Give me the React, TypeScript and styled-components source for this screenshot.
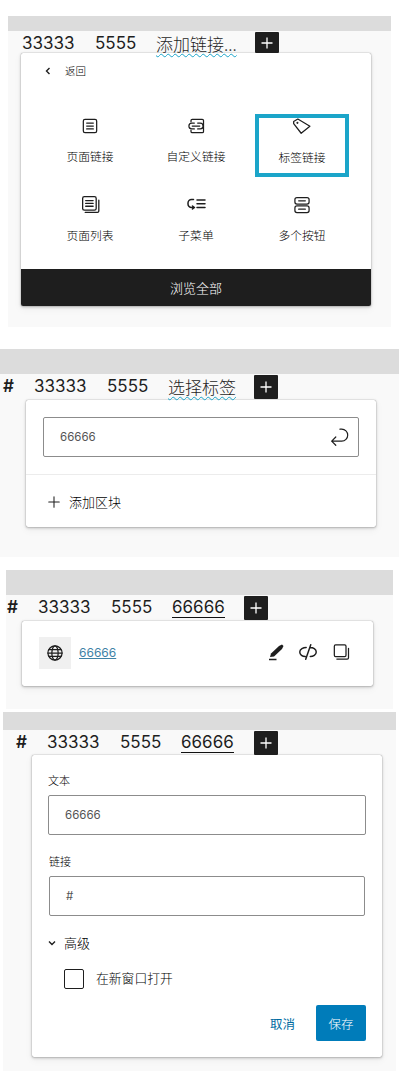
import React from "react";
import styled, { createGlobalStyle } from "styled-components";

const Global = createGlobalStyle`
  html, body { margin: 0; padding: 0; background: #fff; }
  body { font-family: Inter, "Noto Sans CJK SC", sans-serif; color: #1e1e1e; }
  * { box-sizing: border-box; }
`;

const Page = styled.div`
  width: 407px;
  height: 1081px;
  overflow: hidden;
  display: flex;
  flex-direction: column;
`;

const Section = styled.section<{ $top: number; $left: number; $width: number; $height: number }>`
  margin-top: ${(p) => p.$top}px;
  margin-left: ${(p) => p.$left}px;
  width: ${(p) => p.$width}px;
  height: ${(p) => p.$height}px;
  background: #f9f9f9;
  flex: none;
`;

const GrayBar = styled.div<{ $h: number }>`
  height: ${(p) => p.$h}px;
  background: #dcdcdc;
`;

const NavRow = styled.div<{ $pad: number; $h: number }>`
  height: ${(p) => p.$h}px;
  padding-left: ${(p) => p.$pad}px;
  display: flex;
  align-items: flex-start;
  font-size: 17px;
  line-height: 25px;
  color: #1e1e1e;
`;

const Hash = styled.span`
  width: 31px;
  flex: none;
  font-weight: 600;
`;

const NavItem = styled.span<{ $w: number }>`
  width: ${(p) => p.$w}px;
  flex: none;
  white-space: nowrap;
`;

const Wavy = styled.span`
  text-decoration: underline wavy #1ba5c9 1px;
  text-underline-offset: 2px;
  font-family: "Noto Sans CJK SC", sans-serif;
  font-weight: 300;
  color: #1e1e1e;
`;

const Underlined = styled.span`
  border-bottom: 1px solid #111;
  padding-bottom: 0;
`;

const AddButton = styled.span<{ $h: number }>`
  width: 24px;
  height: ${(p) => p.$h}px;
  margin-top: 1px;
  background: #1e1e1e;
  border-radius: 1px;
  display: flex;
  align-items: center;
  justify-content: center;
  flex: none;
`;

const Popover = styled.div<{ $left: number; $width: number; $height: number }>`
  margin-left: ${(p) => p.$left}px;
  width: ${(p) => p.$width}px;
  height: ${(p) => p.$height}px;
  background: #fff;
  border-radius: 2px;
  box-shadow: 0 0 1px rgba(0, 0, 0, 0.5), 0 1px 3px rgba(0, 0, 0, 0.25), 0 3px 8px rgba(0, 0, 0, 0.05);
  display: flex;
  flex-direction: column;
  overflow: hidden;
  font-weight: 300;
  color: #000;
`;

const BackRow = styled.div`
  height: 61px;
  padding: 12px 0 0 24px;
  display: flex;
  align-items: flex-start;
  gap: 14px;
  font-size: 10.5px;
  line-height: 13px;
`;

const Grid = styled.div`
  padding: 0 16px;
  display: grid;
  grid-template-columns: repeat(3, 106px);
  grid-auto-rows: 63px;
  row-gap: 16px;
`;

const Tile = styled.div<{ $on?: boolean }>`
  width: 94px;
  justify-self: center;
  display: flex;
  flex-direction: column;
  align-items: center;
  padding-top: ${(p) => (p.$on ? 0 : 3)}px;
  border: ${(p) => (p.$on ? "4px solid #1ba5c9" : "none")};
  font-size: 11.8px;
  line-height: 14px;
`;

const TileIcon = styled.div`
  height: 17px;
  display: flex;
  align-items: center;
  justify-content: center;
`;

const TileLabel = styled.div`
  margin-top: 16px;
  white-space: nowrap;
`;

const Footer = styled.div`
  margin-top: auto;
  height: 37px;
  background: #1e1e1e;
  color: #fff;
  font-size: 13px;
  display: flex;
  align-items: center;
  justify-content: center;
`;

const Field = styled.div<{ $ml: number; $mr: number }>`
  margin: 0 ${(p) => p.$mr}px 0 ${(p) => p.$ml}px;
  height: 40px;
  padding: 0 8px 0 16px;
  border: 1px solid #8c8c8c;
  border-radius: 2px;
  background: #fff;
  display: flex;
  align-items: center;
  justify-content: space-between;
  font-size: 11.5px;
  font-weight: 400;
  color: #555;
`;

const SearchTop = styled.div`
  padding-top: 17px;
  height: 75px;
  border-bottom: 1px solid #ececec;
`;

const AddBlock = styled.div`
  padding: 16px 0 0 21px;
  display: flex;
  align-items: center;
  gap: 8px;
  font-size: 13px;
  line-height: 22px;
`;

const LinkRow = styled.div`
  height: 100%;
  padding: 16px 22px 0 17px;
  display: flex;
  align-items: flex-start;
`;

const IconTile = styled.div`
  width: 32px;
  height: 32px;
  background: #f0f0f0;
  display: flex;
  align-items: center;
  justify-content: center;
  flex: none;
`;

const LinkText = styled.a`
  margin-left: 8px;
  font-size: 12px;
  font-weight: 400;
  line-height: 32px;
  color: #3f82a6;
  text-decoration: underline;
  flex: 1;
`;

const ToolIcons = styled.div`
  display: flex;
  align-items: center;
  height: 30px;
  gap: 12px;
`;

const Form = styled.div`
  padding-top: 19px;
  display: flex;
  flex-direction: column;
  height: 100%;
`;

const Label = styled.div<{ $ml: number; $mt: number }>`
  margin: ${(p) => p.$mt}px 0 7px ${(p) => p.$ml}px;
  font-size: 11px;
  line-height: 14px;
`;

const Advanced = styled.div`
  margin: 18px 0 0 16px;
  display: flex;
  align-items: center;
  gap: 8px;
  font-size: 13px;
  line-height: 18px;
`;

const CheckRow = styled.div`
  margin: 17px 0 0 32px;
  display: flex;
  align-items: center;
  gap: 12px;
  font-size: 12.8px;
  line-height: 20px;
`;

const Box = styled.span`
  width: 20px;
  height: 20px;
  border: 1px solid #1e1e1e;
  border-radius: 2px;
  flex: none;
`;

const Actions = styled.div`
  margin: 16px 16px 0 0;
  display: flex;
  justify-content: flex-end;
  align-items: center;
  gap: 21px;
  font-size: 12.5px;
`;

const Cancel = styled.span`
  color: #006ba1;
  font-weight: 400;
`;

const Save = styled.span`
  width: 50px;
  height: 36px;
  background: #007cba;
  color: #fff;
  border-radius: 2px;
  display: flex;
  align-items: center;
  justify-content: center;
`;

const Icon: React.FC<{ size?: number; stroke?: string; sw?: number; children: React.ReactNode }> = ({ size = 20, stroke = "#1e1e1e", sw = 1.5, children }) => (
  <svg width={size} height={size} viewBox="0 0 24 24" fill="none" stroke={stroke} strokeWidth={sw} strokeLinecap="round" strokeLinejoin="round">
    {children}
  </svg>
);

const Plus = () => (
  <svg width="14" height="14" viewBox="0 0 14 14">
    <path d="M7 1.5v11M1.5 7h11" stroke="#fff" strokeWidth="1.3" />
  </svg>
);

const Nav: React.FC<{ pad: number; hash?: boolean; third: React.ReactNode; thirdW: number; h?: number; btnH?: number }> = ({ pad, hash, third, thirdW, h = 24, btnH = 24 }) => (
  <NavRow $pad={pad} $h={h}>
    {hash && <Hash>#</Hash>}
    <NavItem $w={73}>33333</NavItem>
    <NavItem $w={61}>5555</NavItem>
    <NavItem $w={thirdW}>{third}</NavItem>
    <AddButton $h={btnH}><Plus /></AddButton>
  </NavRow>
);

const tiles: { label: string; on?: boolean; icon: React.ReactNode }[] = [
  {
    label: "页面链接",
    icon: (
      <Icon>
        <rect x="4" y="4" width="16" height="16" rx="2" />
        <path d="M8 8.500h8M8 12h8M8 15.500h8" />
      </Icon>
    ),
  },
  {
    label: "自定义链接",
    icon: (
      <Icon>
        <path d="M6 7V5.500A1.500 1.500 0 0 1 7.500 4h12A1.500 1.500 0 0 1 21 5.500v13a1.500 1.500 0 0 1-1.500 1.500h-12A1.500 1.500 0 0 1 6 18.500V17" />
        <path d="M10 8.500H7a3.500 3.500 0 0 0 0 7h3M14 8.500h3a3.500 3.500 0 0 1 0 7h-3M7.500 12h9" />
      </Icon>
    ),
  },
  {
    label: "标签链接",
    on: true,
    icon: (
      <Icon>
        <path d="M2 5.500 7 2.500 21.500 11 11 19.500 2 8z" />
        <circle cx="6.500" cy="7" r="0.500" fill="#1e1e1e" />
      </Icon>
    ),
  },
  {
    label: "页面列表",
    icon: (
      <Icon size={21}>
        <rect x="3" y="3" width="15.500" height="15.500" rx="2" />
        <path d="M6.500 7.500h8.500M6.500 10.800h8.500M6.500 14h8.500M21.500 7v12.500a1.500 1.500 0 0 1-1.500 1.500H6" />
      </Icon>
    ),
  },
  {
    label: "子菜单",
    icon: (
      <Icon size={24}>
        <path d="M9.500 6.500H7.500A3.500 3.500 0 0 0 4 10v1a3.500 3.500 0 0 0 3.500 3.500H10M8.500 13l2 1.500-2 1.500" />
        <path d="M13 7h8M13 10.800h8M13 14.500h8" />
      </Icon>
    ),
  },
  {
    label: "多个按钮",
    icon: (
      <Icon>
        <rect x="3.500" y="3" width="17" height="8" rx="2.500" />
        <rect x="3.500" y="13" width="17" height="8" rx="2.500" />
        <path d="M8 7h8M8 17h8" />
      </Icon>
    ),
  },
];

export default function App() {
  return (
    <Page>
      <Global />
      <Section $top={16} $left={8} $width={383} $height={311}>
        <GrayBar $h={15} />
        <Nav pad={14} h={22} btnH={21} thirdW={99} third={<Wavy>添加链接...</Wavy>} />
        <Popover $left={13} $width={350} $height={253}>
          <BackRow>
            <svg width="6" height="8" viewBox="0 0 6 8" style={{ marginTop: 2 }}>
              <path d="M4.500 1 1.500 4l3 3" fill="none" stroke="#1e1e1e" strokeWidth="1.400" />
            </svg>
            <span>返回</span>
          </BackRow>
          <Grid>
            {tiles.map((t) => (
              <Tile key={t.label} $on={t.on}>
                <TileIcon>{t.icon}</TileIcon>
                <TileLabel>{t.label}</TileLabel>
              </Tile>
            ))}
          </Grid>
          <Footer>浏览全部</Footer>
        </Popover>
      </Section>

      <Section $top={22} $left={0} $width={399} $height={208}>
        <GrayBar $h={25} />
        <Nav pad={3} hash h={26} thirdW={86} third={<Wavy>选择标签</Wavy>} />
        <Popover $left={26} $width={350} $height={127}>
          <SearchTop>
            <Field $ml={17} $mr={17}>
              <span>66666</span>
              <Icon size={22} sw={1.300}>
                <path d="M13 3.500h2a6.500 6.500 0 0 1 0 13H4M8.500 12l-4.500 4.500 4.500 4.500" />
              </Icon>
            </Field>
          </SearchTop>
          <AddBlock>
            <Icon size={14} sw={1.800}><path d="M12 3v18M3 12h18" /></Icon>
            <span>添加区块</span>
          </AddBlock>
        </Popover>
      </Section>

      <Section $top={13} $left={6} $width={387} $height={139}>
        <GrayBar $h={25} />
        <Nav pad={1} hash h={26} thirdW={72} third={<Underlined>66666</Underlined>} />
        <Popover $left={16} $width={351} $height={65}>
          <LinkRow>
            <IconTile>
              <Icon size={20} sw={1.500}>
                <circle cx="12" cy="12" r="8.500" />
                <ellipse cx="12" cy="12" rx="3.800" ry="8.500" />
                <path d="M3.500 12h17M4.800 8h14.400M4.800 16h14.400" />
              </Icon>
            </IconTile>
            <LinkText>66666</LinkText>
            <ToolIcons>
              <svg width="18" height="18" viewBox="0 0 18 18">
                <path d="M2 16.500h7.500" stroke="#1e1e1e" strokeWidth="1.500" fill="none" />
                <path d="M3 14 4 10.500 12 3 15 1.500 16.500 3 15 6 7 13.500z" fill="#1e1e1e" />
              </svg>
              <Icon size={22} sw={1.600}>
                <path d="M10 7C7 7 3 9 3 12s3 5 6 5M14.500 7c3 0 6.500 2 6.500 5s-3.500 5-6.500 5M15 4 9.500 20" />
              </Icon>
              <Icon size={20} sw={1.500}>
                <rect x="4" y="3.500" width="14" height="14" rx="1.500" />
                <path d="M21 7.500V19a1.500 1.500 0 0 1-1.500 1.500H7" />
              </Icon>
            </ToolIcons>
          </LinkRow>
        </Popover>
      </Section>

      <Section $top={3} $left={3} $width={393} $height={359}>
        <GrayBar $h={18} />
        <Nav pad={13} hash h={25} thirdW={73} third={<Underlined>66666</Underlined>} />
        <Popover $left={29} $width={350} $height={302}>
          <Form>
            <Label $ml={16} $mt={0}>文本</Label>
            <Field $ml={16} $mr={16}><span>66666</span></Field>
            <Label $ml={17} $mt={20}>链接</Label>
            <Field $ml={17} $mr={17}><span>#</span></Field>
            <Advanced>
              <svg width="8" height="6" viewBox="0 0 8 6">
                <path d="M1 1.500l3 3 3-3" fill="none" stroke="#1e1e1e" strokeWidth="1.400" />
              </svg>
              <span>高级</span>
            </Advanced>
            <CheckRow>
              <Box />
              <span>在新窗口打开</span>
            </CheckRow>
            <Actions>
              <Cancel>取消</Cancel>
              <Save>保存</Save>
            </Actions>
          </Form>
        </Popover>
      </Section>
    </Page>
  );
}
